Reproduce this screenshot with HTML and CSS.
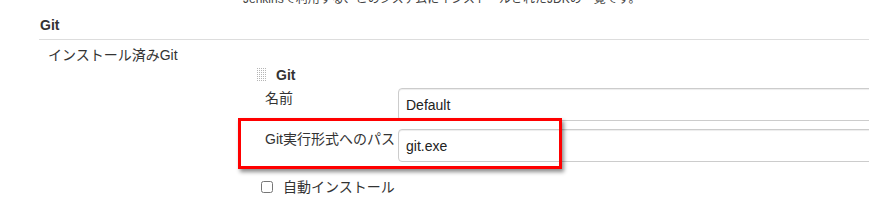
FILE: index.html
```html
<!DOCTYPE html>
<html lang="ja">
<head>
    <meta charset="UTF-8">
    <title>Git</title>
    <link rel="stylesheet" href="styles.css">
</head>
<body>
    <div class="page">
        <p class="desc">Jenkinsで利用する、このシステムにインストールされたJDKの一覧です。</p>
        <h3 class="section-title">Git</h3>
        <div class="installed">インストール済みGit</div>

        <div class="tool">
            <div class="tool-head">
                <svg class="handle" width="10" height="14" viewBox="0 0 10 14">
                    <defs>
                        <pattern id="dots" width="2" height="2" patternUnits="userSpaceOnUse">
                            <rect width="1" height="1" fill="#b5b5b5"/>
                        </pattern>
                    </defs>
                    <rect width="10" height="14" fill="url(#dots)"/>
                </svg>
                <b>Git</b>
            </div>
            <div class="form-row">
                <label class="field-label">名前</label>
                <input type="text" class="field" value="Default">
            </div>
            <div class="form-row">
                <label class="field-label">Git実行形式へのパス</label>
                <input type="text" class="field" value="git.exe">
            </div>
            <div class="check-row">
                <input type="checkbox" class="check">
                <span>自動インストール</span>
            </div>
        </div>
    </div>
    <div class="highlight"></div>
</body>
</html>
```

FILE: styles.css
```css
body {
    margin: 0;
    font-family: "Liberation Sans", "Noto Sans CJK JP", sans-serif;
    font-size: 14px;
    color: #333;
    background-color: #fff;
    overflow: hidden;
}
.page {
    padding-left: 39px;
    overflow: hidden;
}
.desc {
    margin: -9px 0 0 204px;
    font-size: 12px;
    line-height: 16px;
    color: #444;
    white-space: nowrap;
}
.section-title {
    margin: 0;
    padding: 10px 0 6px 1px;
    font-size: 14px;
    line-height: 16px;
    border-bottom: 1px solid #ddd;
}
.installed {
    padding: 7px 0 0 9px;
    line-height: 16px;
}
.tool {
    margin-left: 218px;
}
.tool-head {
    display: flex;
    align-items: center;
    gap: 9px;
    height: 20px;
    margin-top: 2px;
}
.tool-head b {
    line-height: 16px;
}
.handle {
    display: block;
}
.form-row {
    display: flex;
    align-items: flex-start;
    margin-top: 3px;
}
.form-row + .form-row {
    margin-top: 8px;
}
.field-label {
    flex: 0 0 141px;
    padding: 2px 0 0 8px;
    box-sizing: border-box;
    line-height: 16px;
    white-space: nowrap;
}
.field {
    flex: 0 0 520px;
    height: 33px;
    box-sizing: border-box;
    margin: 0;
    padding: 0 7px;
    border: 1px solid #ccc;
    border-radius: 4px;
    box-shadow: inset 0 1px 1px rgba(0, 0, 0, 0.075);
    font-family: "Liberation Sans", "Noto Sans CJK JP", sans-serif;
    font-size: 14px;
    color: #222;
}
.check-row {
    display: flex;
    align-items: center;
    gap: 10px;
    margin-top: 17px;
    padding-left: 4px;
    line-height: 16px;
}
.check {
    margin: 0;
    width: 12px;
    height: 12px;
}
.highlight {
    position: absolute;
    left: 238px;
    top: 118px;
    width: 318px;
    height: 45px;
    border: 3px solid #f00;
    box-shadow: 2px 3px 4px rgba(0, 0, 0, 0.45);
}
```
